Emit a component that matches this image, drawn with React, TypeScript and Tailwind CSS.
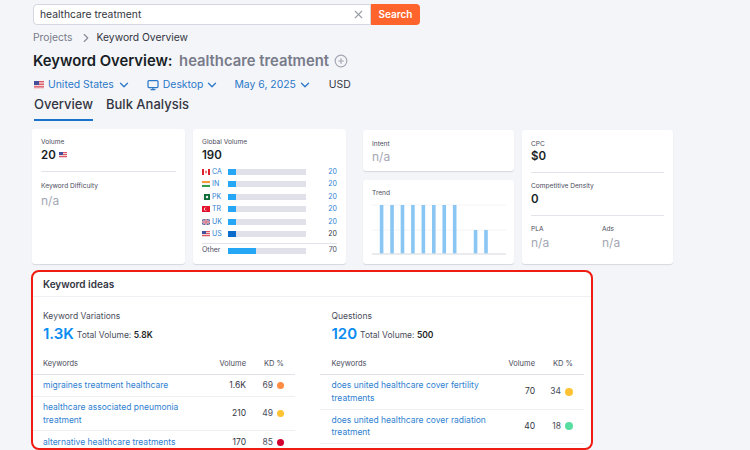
import React from 'react'
import { ChevronDown, ChevronRight, CirclePlus, Monitor, X } from 'lucide-react'

const Flag = ({ code }: { code: string }) => {
  if (code === 'CA') {
    return (
      <svg width="8" height="6" viewBox="0 0 8 6" className="shrink-0">
        <rect width="8" height="6" fill="#fff" />
        <rect width="2" height="6" fill="#e0222f" />
        <rect x="6" width="2" height="6" fill="#e0222f" />
        <path d="M4 1.2 5 3.2 4.3 3.4V4.6H3.7V3.4L3 3.2Z" fill="#e0222f" />
      </svg>
    )
  }
  if (code === 'IN') {
    return (
      <svg width="8" height="6" viewBox="0 0 8 6" className="shrink-0">
        <rect width="8" height="2" fill="#f59b3c" />
        <rect y="2" width="8" height="2" fill="#f4f4f4" />
        <rect y="4" width="8" height="2" fill="#2f9e44" />
      </svg>
    )
  }
  if (code === 'PK') {
    return (
      <svg width="8" height="6" viewBox="0 0 8 6" className="shrink-0">
        <rect width="8" height="6" fill="#0f6b37" />
        <rect width="2" height="6" fill="#f4f4f4" />
        <circle cx="5" cy="3" r="1.2" fill="#f4f4f4" />
      </svg>
    )
  }
  if (code === 'TR') {
    return (
      <svg width="8" height="6" viewBox="0 0 8 6" className="shrink-0">
        <rect width="8" height="6" fill="#e4132b" />
        <circle cx="3.4" cy="3" r="1.6" fill="#fff" />
        <circle cx="3.9" cy="3" r="1.2" fill="#e4132b" />
      </svg>
    )
  }
  if (code === 'UK') {
    return (
      <svg width="8" height="6" viewBox="0 0 8 6" className="shrink-0">
        <rect width="8" height="6" fill="#5a6fa6" />
        <path d="M0 0 8 6M8 0 0 6" stroke="#f2d5d8" strokeWidth="0.8" />
        <path d="M4 0V6M0 3H8" stroke="#f6e6e8" strokeWidth="1.6" />
        <path d="M4 0V6M0 3H8" stroke="#d8506a" strokeWidth="0.9" />
      </svg>
    )
  }
  return (
    <svg width="8" height="6" viewBox="0 0 8 6" className="shrink-0">
      <rect width="8" height="6" fill="#f3d5d8" />
      <rect y="0" width="8" height="1" fill="#dd5866" />
      <rect y="2" width="8" height="1" fill="#dd5866" />
      <rect y="4" width="8" height="1" fill="#dd5866" />
      <rect width="4" height="3" fill="#46509a" />
    </svg>
  )
}

const countries = ['CA', 'IN', 'PK', 'TR', 'UK', 'US']

const Label = ({ children }: { children: React.ReactNode }) => (
  <div className="text-[6.6px] leading-[10px] text-[#4a4c5c]">{children}</div>
)

const Value = ({ children }: { children: React.ReactNode }) => (
  <div className="mt-[0.5px] text-[11.5px] leading-[15px] font-semibold text-[#181e25]">{children}</div>
)

const Empty = () => <div className="mt-[0.5px] text-[12px] leading-[15px] text-[#a4a6b3]">n/a</div>

const Card = ({ className, children }: { className: string; children: React.ReactNode }) => (
  <div className={`rounded-[3px] bg-white shadow-[0_1px_1px_rgba(60,65,90,0.16)] ${className}`}>{children}</div>
)

type KeywordRow = { keyword: React.ReactNode; volume: string; kd: string; dot: string; height: string }

const KeywordTable = ({ rows, inset }: { rows: KeywordRow[]; inset: string }) => (
  <div>
    <div className="flex h-[16px] items-start border-b border-[#e0e1e9] text-[7.5px] leading-[9px] text-[#4a4c5c]">
      <div className={`flex-1 ${inset}`}>Keywords</div>
      <div className="w-[40px] text-right">Volume</div>
      <div className="w-[49px] pr-[11px] text-right">KD %</div>
    </div>
    {rows.map((row) => (
      <div key={row.volume} className={`flex items-center border-b border-[#eeeff3] ${row.height}`}>
        <div className={`flex-1 text-[8.5px] leading-[12.5px] text-[#2f7fd0] ${inset}`}>{row.keyword}</div>
        <div className="w-[40px] text-right text-[8.5px] text-[#333642]">{row.volume}</div>
        <div className="flex w-[49px] items-center justify-end pr-[11px] text-[8.5px] text-[#4a4c5c]">
          {row.kd}
          <span className={`ml-[4px] shrink-0 rounded-full ${row.dot}`} />
        </div>
      </div>
    ))}
  </div>
)

const TrendChart = () => {
  const heights = [49, 49, 49, 49, 49, 49, 49, 49, 0, 24, 24]
  return (
    <svg width="134" height="51" viewBox="0 0 134 51" className="mt-[6px] -ml-[0.5px] block">
      <path d="M0 1H134M0 26H134" stroke="#f4f4f7" strokeWidth="1" />
      {heights.map((h, i) => (
        <rect key={i} x={7.8 + i * 10.44} y={50 - h} width="3.6" height={h} fill="#8ac6f4" />
      ))}
      <path d="M0 50H134" stroke="#e3e4ea" strokeWidth="1.5" />
    </svg>
  )
}

export default function App() {
  return (
    <div className="h-[450px] w-[750px] overflow-hidden bg-[#f4f5f9] pt-[4px] font-['Inter',sans-serif] text-[#181e25]">
      <div className="ml-[33px]">
        <div className="flex h-[21px] w-[387px]">
          <div className="flex flex-1 items-center justify-between rounded-l-[4px] border border-[#d5d6df] bg-white pr-[5px] pl-[6px] text-[10.3px] text-[#333642]">
            healthcare treatment
            <X size={13} strokeWidth={2} className="text-[#9b9da9]" />
          </div>
          <div className="flex w-[49px] items-center justify-center rounded-r-[4px] bg-[#ff642d] text-[10px] font-semibold text-white">
            Search
          </div>
        </div>

        <div className="mt-[7px] flex h-[11px] items-center text-[10.3px] leading-[11px]">
          <span className="text-[#787b8a]">Projects</span>
          <ChevronRight size={14} className="mr-[4px] ml-[6px] text-[#8a8c9a]" />
          <span className="text-[#333642]">Keyword Overview</span>
        </div>

        <div className="mt-[8px] flex h-[20px] items-center text-[14.8px] font-semibold">
          <span>Keyword Overview:</span>
          <span className="ml-[6.5px] text-[#787b8a]">healthcare treatment</span>
          <CirclePlus size={14} className="ml-[5px] text-[#a4a6b3]" />
        </div>

        <div className="mt-[7px] flex h-[14px] items-center text-[10.4px] text-[#2b78c8]">
          <svg width="10" height="8" viewBox="0 0 10 8" className="ml-[1px] shrink-0">
            <rect width="10" height="8" fill="#f3d5d8" />
            <rect y="0" width="10" height="1.3" fill="#dd5866" />
            <rect y="2.6" width="10" height="1.3" fill="#dd5866" />
            <rect y="5.2" width="10" height="1.3" fill="#dd5866" />
            <rect width="5" height="4" fill="#46509a" />
          </svg>
          <span className="ml-[4px]">United States</span>
          <ChevronDown size={14} strokeWidth={2.25} className="ml-[3px]" />
          <Monitor size={12} strokeWidth={2.5} className="ml-[16px]" />
          <span className="ml-[4px]">Desktop</span>
          <ChevronDown size={14} strokeWidth={2.25} className="ml-[2px]" />
          <span className="ml-[15px]">May 6, 2025</span>
          <ChevronDown size={14} strokeWidth={2.25} className="ml-[2px]" />
          <span className="ml-[17px] text-[#333642]">USD</span>
        </div>

        <div className="mt-[3px] flex text-[13px] leading-[18px] font-medium text-[#333642]">
          <div className="ml-[1px] h-[26px] w-[59px] border-b-2 border-[#1a73c9]">Overview</div>
          <div className="ml-[13px]">Bulk Analysis</div>
        </div>
      </div>

      <div className="mt-[8px] ml-[32px] flex items-stretch">
        <Card className="h-[135px] w-[153px] px-[9px] pt-[8px]">
          <Label>Volume</Label>
          <Value>
            <span className="flex items-center gap-[3px]">
              20
              <Flag code="US" />
            </span>
          </Value>
          <div className="mt-[8px] mb-[9px] h-[1px] bg-[#e3e4ea]" />
          <Label>Keyword Difficulty</Label>
          <div className="mt-[2.5px]">
            <Empty />
          </div>
        </Card>

        <Card className="ml-[8px] h-[135px] w-[153px] px-[9px] pt-[8px]">
          <Label>Global Volume</Label>
          <Value>190</Value>
          <div className="mt-[3px]">
            {countries.map((c) => (
              <div key={c} className="flex h-[12.5px] items-center text-[7px]">
                <Flag code={c} />
                <span className="ml-[2px] w-[16px] text-[#2f7fd0]">{c}</span>
                <div className="h-[6px] w-[78px] bg-[#e0e1e9]">
                  <div className={`h-full w-[8px] ${c === 'US' ? 'bg-[#0a6ccb]' : 'bg-[#26a7f5]'}`} />
                </div>
                <span className={`flex-1 text-right ${c === 'US' ? 'text-[#333642]' : 'text-[#2f7fd0]'}`}>20</span>
              </div>
            ))}
          </div>
          <div className="mt-[2px] h-[1px] bg-[#e3e4ea]" />
          <div className="mt-[1px] flex h-[12px] items-center text-[7px] text-[#4a4c5c]">
            <span className="w-[26px]">Other</span>
            <div className="h-[6px] w-[78px] bg-[#e0e1e9]">
              <div className="h-full w-[28px] bg-[#26a7f5]" />
            </div>
            <span className="flex-1 text-right">70</span>
          </div>
        </Card>

        <div className="ml-[17px] flex w-[151px] flex-col pt-[1px]">
          <Card className="h-[41px] px-[9px] pt-[8.5px]">
            <Label>Intent</Label>
            <Empty />
          </Card>
          <Card className="mt-[9px] h-[84px] px-[9px] pt-[8px]">
            <Label>Trend</Label>
            <TrendChart />
          </Card>
        </div>

        <Card className="mt-[1px] ml-[8px] h-[134px] w-[151px] px-[9px] pt-[8.5px]">
          <Label>CPC</Label>
          <Value>$0</Value>
          <div className="mt-[7.5px] mb-[8px] h-[1.5px] bg-[#e3e4ea]" />
          <Label>Competitive Density</Label>
          <Value>0</Value>
          <div className="mt-[8px] mb-[8px] h-[1.5px] bg-[#e3e4ea]" />
          <div className="flex">
            <div className="w-[71px]">
              <Label>PLA</Label>
              <Empty />
            </div>
            <div>
              <Label>Ads</Label>
              <Empty />
            </div>
          </div>
        </Card>
      </div>

      <div className="mt-[6px] ml-[31px] h-[180px] w-[562px] overflow-hidden rounded-[8px] border-2 border-[#ee1c12] bg-white">
        <div className="flex h-[25px] items-center border-b border-[#eff0f4] pl-[10px] text-[10px] font-semibold text-[#333642]">
          Keyword ideas
        </div>
        <div className="flex pt-[13px]">
          <div className="w-[262px]">
            <div className="pl-[10px] text-[8.5px] leading-[12px] text-[#4a4c5c]">Keyword Variations</div>
            <div className="mt-[2px] flex h-[20px] items-center pl-[10px]">
              <span className="text-[15px] font-semibold text-[#0b8cf0]">1.3K</span>
              <span className="ml-[3px] pt-[2px] text-[8.5px] text-[#4a4c5c]">
                Total Volume: <span className="font-semibold text-[#181e25]">5.8K</span>
              </span>
            </div>
            <div className="mt-[15px]">
              <KeywordTable
                inset="pl-[10px]"
                rows={[
                  { keyword: 'migraines treatment healthcare', volume: '1.6K', kd: '69', dot: 'h-[7px] w-[7px] bg-[#ff8c43]', height: 'h-[22px]' },
                  { keyword: <>healthcare associated pneumonia<br />treatment</>, volume: '210', kd: '49', dot: 'h-[7px] w-[7px] bg-[#ffc233]', height: 'h-[34px]' },
                  { keyword: 'alternative healthcare treatments', volume: '170', kd: '85', dot: 'h-[7px] w-[7px] bg-[#d1002f]', height: 'h-[23px]' },
                ]}
              />
            </div>
          </div>
          <div className="ml-[25px] w-[264px]">
            <div className="pl-[11.5px] text-[8.5px] leading-[12px] text-[#4a4c5c]">Questions</div>
            <div className="mt-[2px] flex h-[20px] items-center pl-[11.5px]">
              <span className="text-[15px] font-semibold text-[#0b8cf0]">120</span>
              <span className="ml-[3px] pt-[2px] text-[8.5px] text-[#4a4c5c]">
                Total Volume: <span className="font-semibold text-[#181e25]">500</span>
              </span>
            </div>
            <div className="mt-[15px]">
              <KeywordTable
                inset="pl-[11.5px]"
                rows={[
                  { keyword: <>does united healthcare cover fertility<br />treatments</>, volume: '70', kd: '34', dot: 'h-[8px] w-[8px] bg-[#ffc233]', height: 'h-[34.5px]' },
                  { keyword: <>does united healthcare cover radiation<br />treatment</>, volume: '40', kd: '18', dot: 'h-[8px] w-[8px] bg-[#59dda0]', height: 'h-[34.5px]' },
                ]}
              />
            </div>
          </div>
        </div>
      </div>
    </div>
  )
}
